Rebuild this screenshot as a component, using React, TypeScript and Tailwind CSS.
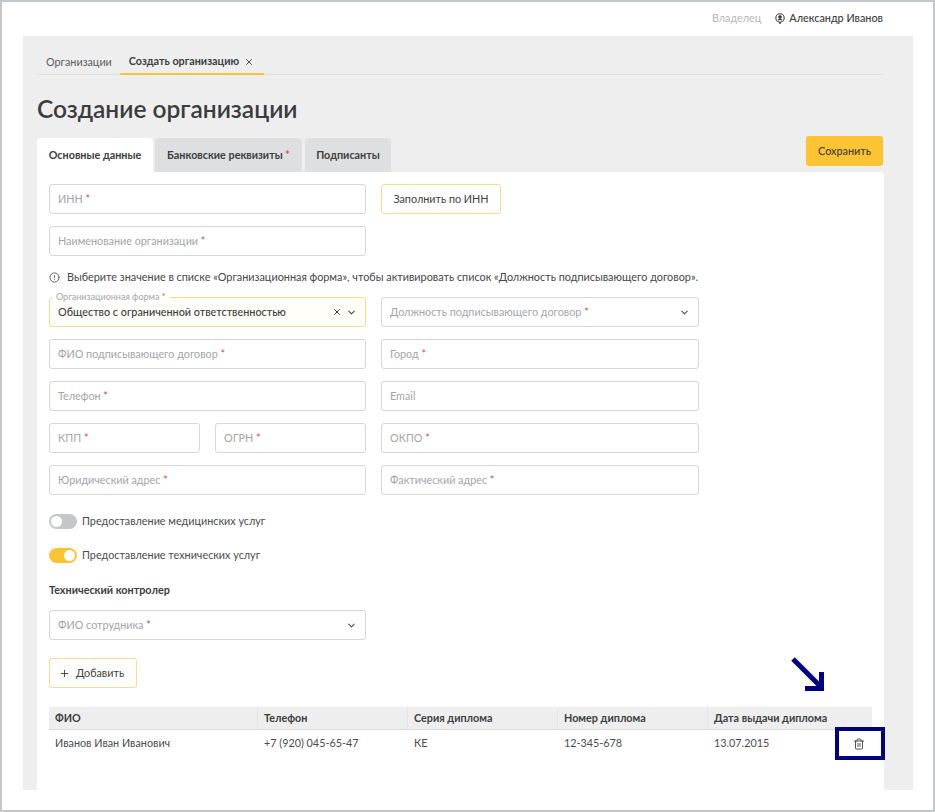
import React from 'react';
import { ChevronDown, CircleAlert, Plus, Trash2, X } from 'lucide-react';

const Req = () => <span className="text-[#e5484d]"> *</span>;

const Field = ({ label, req = true, select = false, className = 'w-[317px]' }: { label: string; req?: boolean; select?: boolean; className?: string }) => (
  <div className={`h-[30px] flex items-center justify-between rounded-[3px] border border-[#d5d7d9] bg-white pl-[8px] pr-[8px] ${className}`}>
    <span className="text-[10.8px] text-[#a3a5a8]">
      {label}
      {req && <Req />}
    </span>
    {select && <ChevronDown size={11} strokeWidth={2.2} className="text-[#44474a]" />}
  </div>
);

const Toggle = ({ on, label }: { on: boolean; label: string }) => (
  <div className="flex items-center gap-[5px]">
    <div className={`w-[28px] h-[15px] rounded-full flex items-center px-[2px] ${on ? 'bg-[#fcc433] justify-end' : 'bg-[#c4c6c8] justify-start'}`}>
      <div className="w-[11px] h-[11px] rounded-full bg-white" />
    </div>
    <span className="text-[10.8px] text-[#4a4c4f]">{label}</span>
  </div>
);

const columns = ['ФИО', 'Телефон', 'Серия диплома', 'Номер диплома', 'Дата выдачи диплома'];
const values = ['Иванов Иван Иванович', '+7 (920) 045-65-47', 'КЕ', '12-345-678', '13.07.2015'];
const widths = ['w-[209px]', 'w-[150px]', 'w-[150px]', 'w-[150px]', 'w-[164px]'];

export default function App() {
  return (
    <div className="relative w-[935px] h-[812px] overflow-hidden bg-white border-2 border-[#c3c7ca] font-['Lato','Open_Sans',sans-serif] text-[#3c3e41]">
      {/* Top bar */}
      <div className="h-[34px] pb-[2px] flex items-center justify-end gap-[14px] pr-[50px] text-[10.8px]">
        <span className="text-[#b5b7b9]">Владелец</span>
        <span className="flex items-center gap-[4px] font-medium">
          <svg width="10" height="11" viewBox="0 0 10 11" fill="none" stroke="#3c3e41" strokeWidth="1.1">
            <circle cx="5" cy="5" r="4.2" />
            <circle cx="5" cy="4" r="1.3" fill="#3c3e41" />
            <path d="M3 7.2c1-.8 3-.8 4 0M4 9.4 5 10.5 6 9.4" />
          </svg>
          Александр Иванов
        </span>
      </div>

      {/* Gray panel */}
      <div className="ml-[21px] w-[890px] h-[754px] bg-[#eeeeee] pl-[14px] pr-[29px]">
        <div className="h-[39px] flex items-end border-b border-[#dcdedf] text-[10.8px]">
          <div className="h-[39px] flex items-center pl-[9px] pr-[8px] pt-[15px] text-[#5b5d60]">Организации</div>
          <div className="h-[40px] -mb-px flex items-center gap-[5px] pl-[9px] pr-[10px] pt-[15px] border-b-2 border-[#fcc433] font-bold">
            Создать организацию
            <X size={10} strokeWidth={2.2} />
          </div>
        </div>

        <h1 className="mt-[19px] h-[30px] leading-[30px] text-[24.5px] font-semibold text-[#3a3c3f]">Создание организации</h1>

        {/* Section tabs */}
        <div className="mt-[11px] flex items-end justify-between h-[37px]">
          <div className="flex items-end gap-[2px] text-[10.8px] font-bold">
            <div className="w-[116px] h-[34px] flex items-center justify-center bg-white rounded-t-[4px]">Основные данные</div>
            <div className="w-[147px] h-[34px] flex items-center justify-center bg-[#dedfe0] rounded-t-[4px]">
              <span>Банковские реквизиты<Req /></span>
            </div>
            <div className="ml-px w-[86px] h-[34px] flex items-center justify-center bg-[#dedfe0] rounded-t-[4px]">Подписанты</div>
          </div>
          <div className="w-[77px] h-[30px] mb-[6px] mr-px flex items-center justify-center rounded-[3px] bg-[#fcc433] text-[10.8px] font-medium">Сохранить</div>
        </div>

        {/* Card */}
        <div className="w-[847px] h-[618px] bg-white rounded-tr-[4px] px-[12px] pt-[12px]">
          <div className="flex flex-col gap-[12px]">
            <div className="flex gap-[15px]">
              <Field label="ИНН" />
              <div className="w-[120px] h-[30px] flex items-center justify-center rounded-[3px] border border-[#fbdc8c] text-[10.8px]">Заполнить по ИНН</div>
            </div>
            <Field label="Наименование организации" />
          </div>

          <div className="mt-[14px] h-[14px] flex items-center gap-[7px] text-[10.85px] text-[#45474a]">
            <CircleAlert size={11} strokeWidth={1.8} />
            Выберите значение в списке «Организационная форма», чтобы активировать список «Должность подписывающего договор».
          </div>

          <div className="mt-[13px] flex flex-col gap-[12px]">
            <div className="flex gap-[15px]">
              <div className="relative w-[317px] h-[30px] flex items-center justify-between rounded-[3px] border border-[#fbdc8c] bg-[#fffef9] pl-[8px] pr-[8px]">
                <span className="absolute left-[2px] -top-[6px] bg-white px-[4px] leading-[10px] text-[9px] text-[#a3a5a8]">Организационная форма<Req /></span>
                <span className="text-[10.8px] font-medium">Общество с ограниченной ответственностью</span>
                <span className="flex items-center gap-[4px]">
                  <X size={10} strokeWidth={2.4} />
                  <ChevronDown size={11} strokeWidth={2.2} />
                </span>
              </div>
              <Field label="Должность подписывающего договор" select className="w-[318px]" />
            </div>
            <div className="flex gap-[15px]">
              <Field label="ФИО подписывающего договор" />
              <Field label="Город" className="w-[318px]" />
            </div>
            <div className="flex gap-[15px]">
              <Field label="Телефон" />
              <Field label="Email" req={false} className="w-[318px]" />
            </div>
            <div className="flex gap-[15px]">
              <Field label="КПП" className="w-[151px]" />
              <Field label="ОГРН" className="w-[151px]" />
              <Field label="ОКПО" className="w-[318px]" />
            </div>
            <div className="flex gap-[15px]">
              <Field label="Юридический адрес" />
              <Field label="Фактический адрес" className="w-[318px]" />
            </div>
          </div>

          <div className="mt-[18px] flex flex-col gap-[18px]">
            <Toggle on={false} label="Предоставление медицинских услуг" />
            <Toggle on label="Предоставление технических услуг" />
          </div>

          <div className="mt-[20px] h-[14px] leading-[14px] text-[10.8px] font-bold">Технический контролер</div>
          <Field label="ФИО сотрудника" select className="mt-[13px] w-[317px]" />

          <div className="mt-[18px] w-[88px] h-[30px] pr-[3px] flex items-center justify-center gap-[6px] rounded-[3px] border border-[#fbdc8c] text-[10.8px]">
            <Plus size={11} strokeWidth={2} />
            Добавить
          </div>

          {/* Table */}
          <div className="mt-[19px] w-[823px] text-[10.8px]">
            <div className="h-[23px] flex bg-[#eeeeee] border-b border-[#d8dadc] font-bold">
              {columns.map((c, i) => (
                <div key={c} className={`${widths[i]} flex items-center pl-[6px] ${i < 4 ? 'border-r border-[#e4e5e6]' : ''}`}>{c}</div>
              ))}
            </div>
            <div className="h-[25px] flex items-center">
              {values.map((v, i) => (
                <div key={v} className={`${widths[i]} pl-[6px] text-[#4a4c4f]`}>{v}</div>
              ))}
            </div>
          </div>
        </div>
      </div>

      {/* Annotation */}
      <svg className="absolute left-[787px] top-[654px]" width="40" height="40" viewBox="0 0 40 40" fill="none" stroke="#000080" strokeWidth="5">
        <path d="M4 3 32 31M32.5 16V32.5H16" />
      </svg>
      <div className="absolute left-[833px] top-[725px] w-[50px] h-[33px] pr-[2px] border-[4px] border-[#000080] flex items-center justify-center">
        <Trash2 size={12} strokeWidth={1.8} />
      </div>
    </div>
  );
}
